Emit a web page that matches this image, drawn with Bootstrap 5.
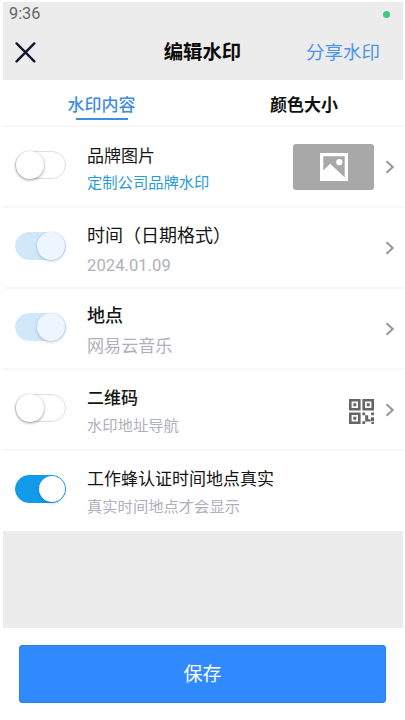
<!DOCTYPE html>
<html lang="zh-CN">
<head>
<meta charset="utf-8">
<meta name="viewport" content="width=device-width, initial-scale=1">
<title>编辑水印</title>
<link href="https://cdn.jsdelivr.net/npm/bootstrap@5.3.0/dist/css/bootstrap.min.css" rel="stylesheet">
<style>
body{font-family:Roboto,"Noto Sans CJK SC",sans-serif;background:#fefefe;color:#151515}
.screen{height:720px;padding:2px 2px 0 3px;overflow:hidden}
.top{height:78px;background:#ececec}
.status{height:25px;padding:0 13px 0 6px;font-size:16.3px;color:#666}
.dot{width:7px;height:7px;background:#3ccb7c;margin-top:-1px}
.bar{height:50px;padding:0 23px 0 12px}
.bar>*{flex:1 1 0}
.bar h1{font-size:19.4px;font-weight:700;color:#0c0c0c;line-height:30px;padding:2px 0 0 2px}
.share{font-size:18.5px;line-height:30px;color:#4a94ea;padding-top:2px}
.tabs{height:47px;border-bottom:2px solid #f7f7f7}
.tab{font-size:17px;line-height:26px;font-weight:700;color:#111;padding:12px 0 0 2px}
.tab.on{color:#3e8ce4;font-weight:500;padding:12px 3px 0 0}
.tab.on::after{content:"";display:block;width:52px;height:2px;background:#3e8ce4}
.opt{height:81px;padding:0 8px 0 12px;border-bottom:2px solid #f7f7f7}
.opt:last-child{border:0;height:80px}
.sw{width:51px;height:28px;border-radius:14px;border:1px solid #dedede;background:#fff;margin-top:24px;padding:0;display:flex;flex:none}
.sw i{width:28px;height:28px;border-radius:50%;background:#fff;margin:-1px 0 0 0;box-shadow:0 1px 3px rgba(0,0,0,.42)}
.sw.dim,.sw.full{justify-content:flex-end;border-color:#d0e8fa;background:#d0e8fa}
.sw.dim i{background:#edf6fe;box-shadow:0 1px 3px rgba(60,100,140,.4)}
.sw.full{background:#129bea;border-color:#129bea}
.sw.full i{width:26px;height:26px;margin-top:0;box-shadow:0 2px 3px rgba(0,0,0,.15)}
.txt{margin-left:21px;white-space:nowrap}
.t{font-size:17px;line-height:26px}
.s{font-size:15.3px;line-height:26px;color:#b0b0ba}
.big .t{font-size:18px}.big .s{font-size:17.1px}
.num .s{font-size:16.6px;letter-spacing:.05px}
.p1{padding-top:16px}.p2{padding-top:15px}.p3{padding-top:14px}.p4{padding-top:15px}.p5{padding-top:15px}
.p3 .t,.p4 .t{font-weight:500}
.p1 .s{color:#2a9bd6;margin-top:1px}.p2 .s{margin-top:4px}.p3 .s{margin-top:4px}.p4 .s{margin-top:2px}.p5 .s{margin-top:2px}
.thumb{width:81px;height:46px;border-radius:3px;background:#a8a8a8}
.chev{margin-left:11px;margin-top:1px}
.qr{margin-top:3px}
.gap-area{height:97px;background:#ececec}
.foot{padding:17px 17px 0 16px}
.save{height:58px;border-radius:3px;background:#3089fd;border:1px solid #2a80ee;color:#fff;font-size:19px;padding:3px 0 0}
.save:hover{background:#3089fd;color:#fff}
</style>
</head>
<body>
<div class="screen">
  <header class="top">
    <div class="status d-flex justify-content-between align-items-center"><span>9:36</span><span class="dot rounded-circle"></span></div>
    <div class="bar d-flex align-items-center">
      <div class="d-flex"><svg width="21" height="21" viewBox="0 0 21 21" fill="none" stroke="#101532" stroke-width="2.4" stroke-linecap="round"><path d="M1.6 1.4L19.3 19.4M19.3 1.4L1.6 19.4"/></svg></div>
      <h1 class="m-0 text-center ms-2">编辑水印</h1>
      <div class="share text-end">分享水印</div>
    </div>
  </header>
  <nav class="tabs row g-0 bg-white">
    <div class="col-6 tab on d-flex flex-column align-items-center">水印内容</div>
    <div class="col-6 tab text-center">颜色大小</div>
  </nav>
  <main class="bg-white">
    <div class="opt d-flex">
      <span class="sw"><i></i></span>
      <div class="txt p1"><div class="t">品牌图片</div><div class="s">定制公司品牌水印</div></div>
      <div class="ms-auto d-flex align-items-center">
        <div class="thumb d-flex align-items-center justify-content-center"><svg width="28" height="28" viewBox="0 0 28 28"><path fill="#fff" fill-rule="evenodd" d="M0 0H28V28H0ZM3.3 3.3V17.5L10.2 10.8L24.7 24.5V3.3Z"/><circle cx="19.3" cy="9.2" r="3.1" fill="#fff"/></svg></div>
        <svg class="chev" width="10" height="14" viewBox="0 0 10 14" fill="none" stroke="#969696" stroke-width="2"><path d="M1.5 1.3L7.7 7L1.5 12.7"/></svg>
      </div>
    </div>
    <div class="opt d-flex">
      <span class="sw dim"><i></i></span>
      <div class="txt big num p2"><div class="t">时间（日期格式）</div><div class="s">2024.01.09</div></div>
      <div class="ms-auto d-flex align-items-center"><svg class="chev" width="10" height="14" viewBox="0 0 10 14" fill="none" stroke="#969696" stroke-width="2"><path d="M1.5 1.3L7.7 7L1.5 12.7"/></svg></div>
    </div>
    <div class="opt d-flex">
      <span class="sw dim"><i></i></span>
      <div class="txt big p3"><div class="t">地点</div><div class="s">网易云音乐</div></div>
      <div class="ms-auto d-flex align-items-center"><svg class="chev" width="10" height="14" viewBox="0 0 10 14" fill="none" stroke="#969696" stroke-width="2"><path d="M1.5 1.3L7.7 7L1.5 12.7"/></svg></div>
    </div>
    <div class="opt d-flex">
      <span class="sw"><i></i></span>
      <div class="txt p4"><div class="t">二维码</div><div class="s">水印地址导航</div></div>
      <div class="ms-auto d-flex align-items-center">
        <svg class="qr" width="25" height="25" viewBox="0 0 25 25"><path fill="none" stroke="#666" stroke-width="2.6" d="M1.3 1.3H10.3V10.3H1.3ZM14.7 1.3H23.7V10.3H14.7ZM1.3 14.7H10.3V23.7H1.3Z"/><path fill="#666" d="M4.3 4.3h3v3h-3zM17.7 4.3h3v3h-3zM4.3 17.7h3v3h-3zM13.4 13.4h2.8v2.8h-2.8zM22.2 13.4h2.8v2.8h-2.8zM16.2 16.2h3v6.2h-3zM13.4 22.2h2.8v2.8h-2.8zM19.2 20.2h2.4v2.2h-2.4zM22 18.2h3v4h-3zM22.4 23h2.6v2h-2.6z"/></svg>
        <svg class="chev" width="10" height="14" viewBox="0 0 10 14" fill="none" stroke="#969696" stroke-width="2"><path d="M1.5 1.3L7.7 7L1.5 12.7"/></svg>
      </div>
    </div>
    <div class="opt d-flex">
      <span class="sw full"><i></i></span>
      <div class="txt p5"><div class="t">工作蜂认证时间地点真实</div><div class="s">真实时间地点才会显示</div></div>
    </div>
  </main>
  <div class="gap-area"></div>
  <footer class="foot"><button class="btn save w-100 d-block">保存</button></footer>
</div>
<script src="https://cdn.jsdelivr.net/npm/bootstrap@5.3.0/dist/js/bootstrap.bundle.min.js"></script>
</body>
</html>
